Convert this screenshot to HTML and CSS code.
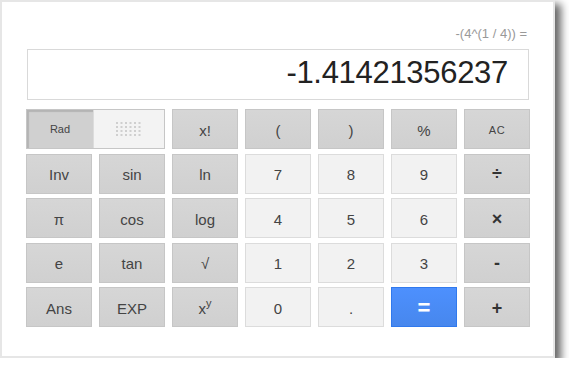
FILE: index.html
```html
<!DOCTYPE html>
<html>
<head>
<meta charset="utf-8">
<link rel="stylesheet" href="styles.css">
</head>
<body>
<div class="card">
  <div class="expr">-(4^(1 / 4)) =</div>
  <div class="display">-1.41421356237</div>
  <div class="keys">
    <div class="toggle">
      <span class="rad">Rad</span>
      <span class="deg">
        <svg width="26" height="14" viewBox="0 0 26 14">
          <g fill="#cfcfcf">
            <rect x="0" y="0" width="2" height="2"/><rect x="4.5" y="0" width="2" height="2"/><rect x="9" y="0" width="2" height="2"/><rect x="13.5" y="0" width="2" height="2"/><rect x="18" y="0" width="2" height="2"/><rect x="22.5" y="0" width="2" height="2"/>
            <rect x="0" y="4" width="2" height="2"/><rect x="4.5" y="4" width="2" height="2"/><rect x="9" y="4" width="2" height="2"/><rect x="13.5" y="4" width="2" height="2"/><rect x="18" y="4" width="2" height="2"/><rect x="22.5" y="4" width="2" height="2"/>
            <rect x="0" y="8" width="2" height="2"/><rect x="4.5" y="8" width="2" height="2"/><rect x="9" y="8" width="2" height="2"/><rect x="13.5" y="8" width="2" height="2"/><rect x="18" y="8" width="2" height="2"/><rect x="22.5" y="8" width="2" height="2"/>
            <rect x="0" y="12" width="2" height="2"/><rect x="4.5" y="12" width="2" height="2"/><rect x="9" y="12" width="2" height="2"/><rect x="13.5" y="12" width="2" height="2"/><rect x="18" y="12" width="2" height="2"/><rect x="22.5" y="12" width="2" height="2"/>
          </g>
        </svg>
      </span>
    </div>
    <div class="k dark">x!</div>
    <div class="k dark">(</div>
    <div class="k dark">)</div>
    <div class="k dark">%</div>
    <div class="k dark small">AC</div>

    <div class="k dark">Inv</div>
    <div class="k dark">sin</div>
    <div class="k dark">ln</div>
    <div class="k light">7</div>
    <div class="k light">8</div>
    <div class="k light">9</div>
    <div class="k dark div">÷</div>

    <div class="k dark">π</div>
    <div class="k dark">cos</div>
    <div class="k dark">log</div>
    <div class="k light">4</div>
    <div class="k light">5</div>
    <div class="k light">6</div>
    <div class="k dark op">×</div>

    <div class="k dark">e</div>
    <div class="k dark">tan</div>
    <div class="k dark">√</div>
    <div class="k light">1</div>
    <div class="k light">2</div>
    <div class="k light">3</div>
    <div class="k dark op">-</div>

    <div class="k dark">Ans</div>
    <div class="k dark">EXP</div>
    <div class="k dark">x<span class="sup">y</span></div>
    <div class="k light">0</div>
    <div class="k light">.</div>
    <div class="k blue">=</div>
    <div class="k dark op">+</div>
  </div>
</div>
</body>
</html>
```
FILE: styles.css
```css
html, body {
  margin: 0;
  padding: 0;
  background: #ffffff;
}
body {
  font-family: "Liberation Sans", Arial, sans-serif;
}
.card {
  box-sizing: border-box;
  width: 555px;
  height: 358px;
  border: 2px solid #e6e6e6;
  background: #ffffff;
  padding: 24px 23px 0 24px;
  box-shadow: 5px 5px 8px 1px rgba(0, 0, 0, 0.6);
}
.expr {
  font-size: 13px;
  line-height: 15px;
  color: #999999;
  text-align: right;
  padding-right: 3px;
}
.display {
  box-sizing: border-box;
  margin: 8px 1px 0 1px;
  height: 51px;
  border: 1px solid #d9d9d9;
  font-size: 31px;
  letter-spacing: -0.3px;
  line-height: 45px;
  color: #222222;
  text-align: right;
  padding-right: 20px;
}
.keys {
  margin-top: 9px;
  display: grid;
  grid-template-columns: repeat(7, 66px);
  grid-auto-rows: 40px;
  column-gap: 7px;
  row-gap: 4.5px;
}
.k {
  box-sizing: border-box;
  display: flex;
  align-items: center;
  justify-content: center;
  font-size: 15px;
  color: #444444;
  padding-top: 2px;
}
.dark {
  background: linear-gradient(#d6d6d6, #d0d0d0);
  border: 1px solid #c6c6c6;
}
.light {
  background: #f2f2f2;
  border: 1px solid #dcdcdc;
}
.blue {
  background: linear-gradient(#4d90fe, #4787ed);
  border: 1px solid #3079ed;
  color: #ffffff;
  font-weight: bold;
  font-size: 22px;
}
.small {
  font-size: 11px;
  letter-spacing: 0.5px;
}
.div {
  font-size: 18px;
  font-weight: bold;
  color: #333333;
}
.op {
  font-weight: bold;
  font-size: 18px;
  color: #333333;
}
.sup {
  font-size: 11px;
  position: relative;
  top: -5px;
}
.toggle {
  grid-column: span 2;
  display: flex;
  box-sizing: border-box;
  border: 1px solid #c6c6c6;
}
.rad {
  flex: 0 0 66px;
  display: flex;
  align-items: center;
  justify-content: center;
  background: #d0d0d0;
  box-shadow: inset 2px 2px 1px #b4b4b4;
  font-size: 11px;
  color: #444444;
}
.deg {
  flex: 1;
  display: flex;
  align-items: center;
  justify-content: center;
  background: #f3f3f3;
  border-left: 1px solid #dcdcdc;
}
```
